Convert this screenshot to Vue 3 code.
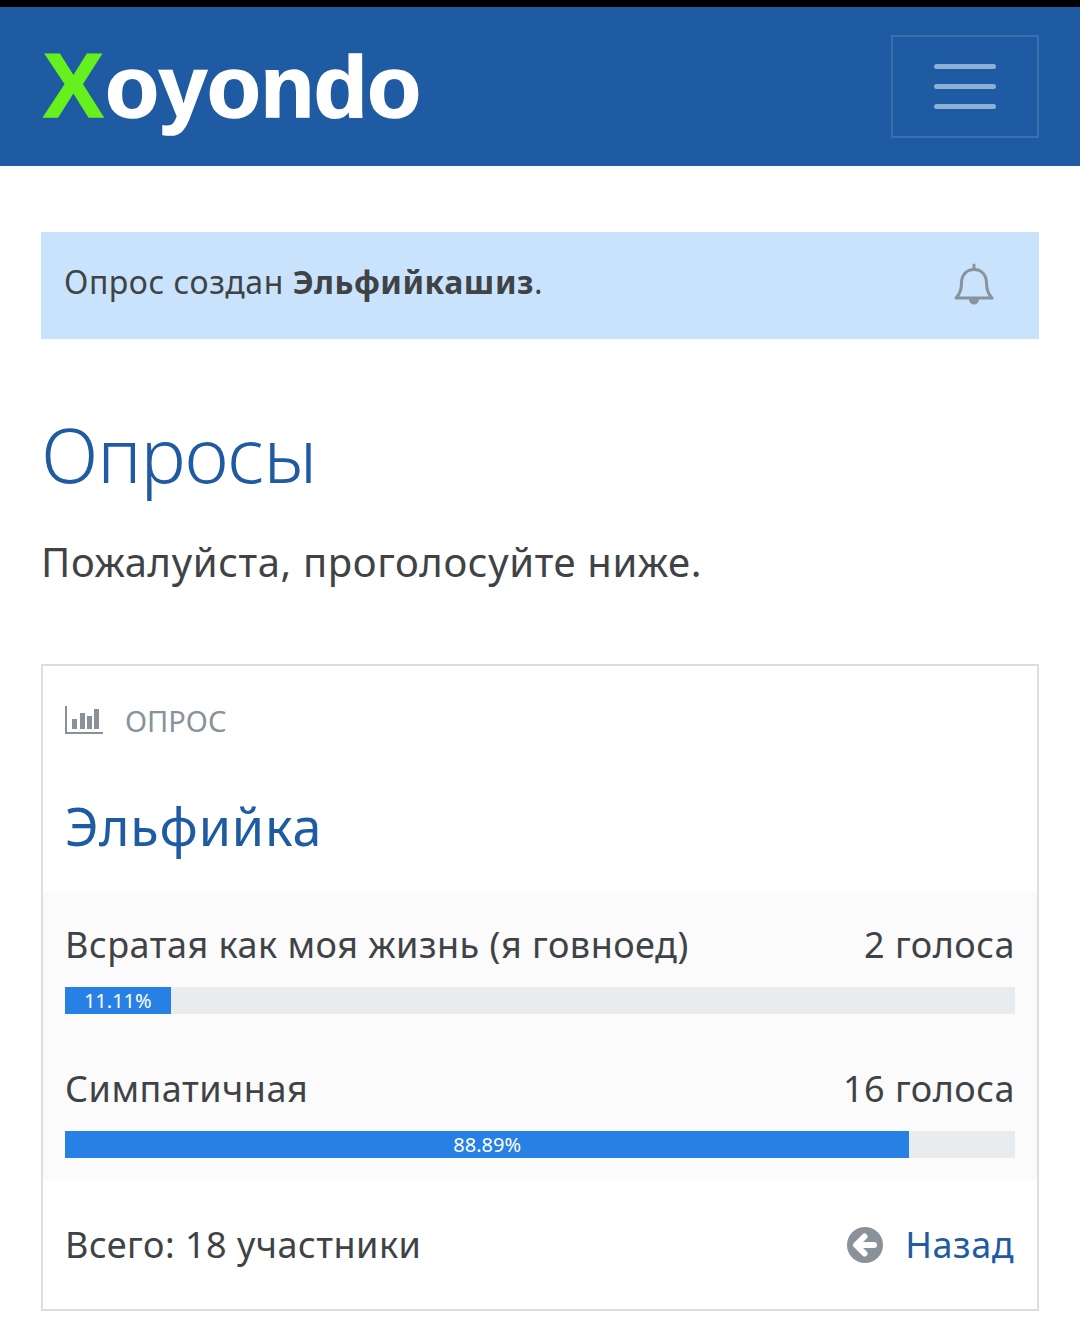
<script setup>
const answers = [
  { label: 'Всратая как моя жизнь (я говноед)', votes: '2 голоса', percent: 11.11 },
  { label: 'Симпатичная', votes: '16 голоса', percent: 88.89 }
]
</script>

<template>
  <div class="page">
    <div class="status-bar"></div>
    <header class="navbar">
      <div class="logo"><span class="logo-x">X</span>oyondo</div>
      <button class="toggler">
        <span></span><span></span><span></span>
      </button>
    </header>

    <main class="content">
      <div class="alert">
        <p>Опрос создан <strong>Эльфийкашиз</strong>.</p>
        <svg class="bell" width="40" height="42" viewBox="0 0 40 42" fill="none" stroke="#8a9299" stroke-width="3" stroke-linejoin="round" stroke-linecap="round">
          <path d="M2 35h36c-4-4-5.500-8-5.500-15 0-8-5-13.500-12.500-13.500S7.500 12 7.500 20c0 7-1.500 11-5.500 15z" />
          <path d="M20 2v4" />
          <path d="M15.500 37c.5 3 2.300 4 4.500 4s4-1 4.500-4z" fill="#8a9299" stroke-width="1" />
        </svg>
      </div>

      <h1>Опросы</h1>
      <p class="lead">Пожалуйста, проголосуйте ниже.</p>

      <section class="card">
        <div class="card-type">
          <svg width="38" height="28" viewBox="0 0 38 28" fill="#8a9299">
            <rect x="0" y="0" width="2" height="28" />
            <rect x="0" y="26" width="38" height="2" />
            <rect x="7" y="13" width="5" height="10" />
            <rect x="15" y="7" width="5" height="16" />
            <rect x="22" y="10" width="5" height="13" />
            <rect x="29" y="3" width="5" height="20" />
          </svg>
          <span>ОПРОС</span>
        </div>
        <h2>Эльфийка</h2>

        <div class="answers">
          <div v-for="answer in answers" :key="answer.label" class="answer">
            <div class="answer-head">
              <span>{{ answer.label }}</span>
              <span>{{ answer.votes }}</span>
            </div>
            <div class="progress">
              <div class="progress-bar" :style="{ width: answer.percent + '%' }">{{ answer.percent }}%</div>
            </div>
          </div>
        </div>

        <div class="card-foot">
          <span>Всего: 18 участники</span>
          <a class="back">
            <svg width="36" height="36" viewBox="0 0 36 36">
              <circle cx="18" cy="18" r="18" fill="#8a9299" />
              <path d="M27 18H10M17.500 9.500 9 18l8.500 8.500" fill="none" stroke="#fff" stroke-width="6" stroke-linecap="round" stroke-linejoin="round" />
            </svg>
            <span>Назад</span>
          </a>
        </div>
      </section>
    </main>
  </div>
</template>

<style>
body {
  background: #fff;
}
</style>

<style scoped>
.page {
  width: 1080px;
  height: 1326px;
  overflow: hidden;
  font-family: "Noto Sans", "Open Sans", sans-serif;
  color: #3f4345;
  background: #fff;
}

.status-bar {
  height: 7px;
  background: #000;
}

.navbar {
  height: 159px;
  background: #1e5ba2;
  display: flex;
  align-items: center;
  justify-content: space-between;
  padding: 0 41px 0 43px;
  box-sizing: border-box;
}

.logo {
  font-family: "Liberation Sans", Arial, sans-serif;
  font-weight: 700;
  font-size: 88px;
  letter-spacing: -0.4px;
  line-height: 1;
  color: #fff;
  -webkit-text-stroke: 1.5px currentColor;
  margin-top: -3px;
}

.logo-x {
  color: #66f01e;
  font-size: 91px;
  letter-spacing: 1.5px;
}

.toggler {
  width: 148px;
  height: 103px;
  margin-top: -1px;
  border: 2px solid #3a70ae;
  background: transparent;
  display: flex;
  flex-direction: column;
  align-items: center;
  justify-content: center;
  gap: 15px;
  padding: 0;
}

.toggler span {
  display: block;
  width: 62px;
  height: 5px;
  border-radius: 3px;
  background: #8fb0d6;
}

.content {
  padding: 66px 41px 0;
}

.alert {
  height: 107px;
  background: #c9e3fd;
  display: flex;
  align-items: center;
  justify-content: space-between;
  padding: 0 45px 0 23px;
}

.alert p {
  margin: 0 0 8px;
  font-size: 32px;
  letter-spacing: 0.55px;
}

.bell {
  margin-bottom: 3px;
}

h1 {
  margin: 65px 0 0;
  font-size: 76px;
  font-weight: 300;
  line-height: 100px;
  letter-spacing: -1px;
  color: #1e5ba2;
}

.lead {
  margin: 32px 0 0;
  font-size: 40px;
  line-height: 52px;
  font-weight: 400;
  letter-spacing: 0.63px;
}

.card {
  margin-top: 76px;
  height: 647px;
  box-sizing: border-box;
  border: 2px solid #ddd;
}

.card-type {
  display: flex;
  align-items: center;
  gap: 22px;
  padding: 36px 0 0 22px;
  height: 72px;
  box-sizing: border-box;
  color: #8a9299;
  font-size: 29px;
}

h2 {
  margin: 55px 0 0 22px;
  font-size: 52px;
  line-height: 66px;
  font-weight: 400;
  letter-spacing: 0.85px;
  color: #1e5ba2;
}

.answers {
  margin-top: 32px;
  height: 290px;
  background: #fbfbfb;
  padding: 30px 22px 0;
  box-sizing: border-box;
}

.answer + .answer {
  margin-top: 51px;
}

.answer-head {
  display: flex;
  justify-content: space-between;
  font-size: 36px;
  line-height: 48px;
  letter-spacing: 0.5px;
}

.progress {
  margin-top: 18px;
  height: 27px;
  background: #e8ecef;
}

.progress-bar {
  height: 100%;
  background: #2780e3;
  color: #fff;
  font-size: 20px;
  line-height: 27px;
  text-align: center;
}

.card-foot {
  display: flex;
  align-items: center;
  justify-content: space-between;
  padding: 40px 23px 0 22px;
  font-size: 36px;
  line-height: 48px;
  letter-spacing: 0.5px;
}

.back {
  display: flex;
  align-items: center;
  gap: 22px;
  color: #1e5ba2;
}
</style>
